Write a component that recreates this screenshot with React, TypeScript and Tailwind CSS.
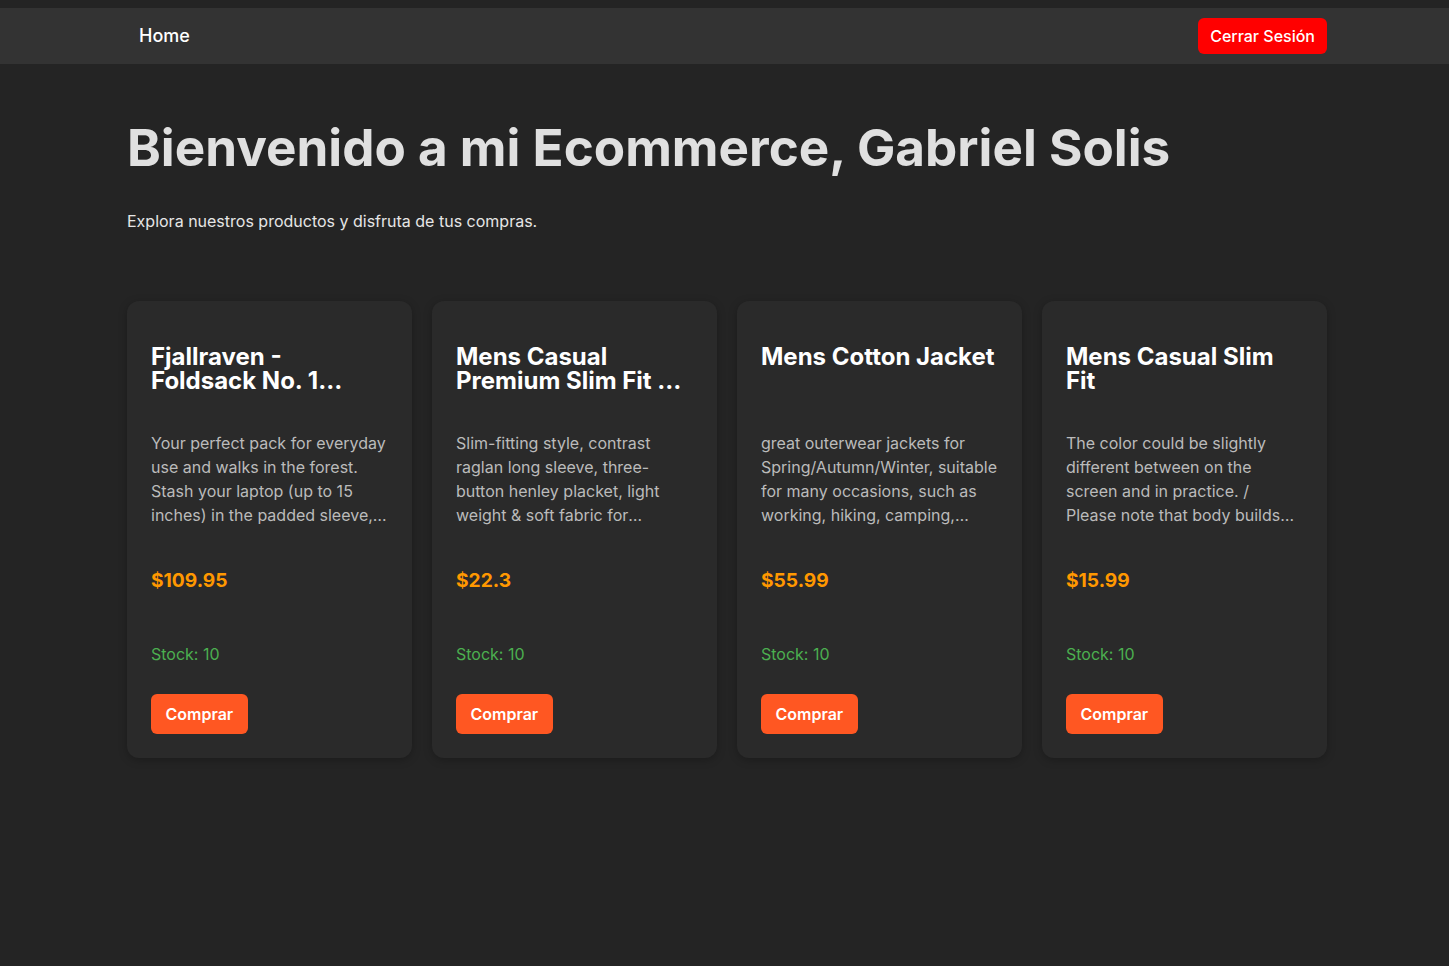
const products = [
  {
    id: 1,
    title: 'Fjallraven - Foldsack No. 1 Backpack, Fits 15 Laptops',
    description:
      'Your perfect pack for everyday use and walks in the forest. Stash your laptop (up to 15 inches) in the padded sleeve, your everyday',
    price: 109.95,
    stock: 10,
  },
  {
    id: 2,
    title: 'Mens Casual Premium Slim Fit T-Shirts',
    description:
      'Slim-fitting style, contrast raglan long sleeve, three-button henley placket, light weight & soft fabric for breathable and comfortable wearing.',
    price: 22.3,
    stock: 10,
  },
  {
    id: 3,
    title: 'Mens Cotton Jacket',
    description:
      'great outerwear jackets for Spring/Autumn/Winter, suitable for many occasions, such as working, hiking, camping, mountain/rock climbing, cycling, traveling or other outdoors.',
    price: 55.99,
    stock: 10,
  },
  {
    id: 4,
    title: 'Mens Casual Slim Fit',
    description:
      'The color could be slightly different between on the screen and in practice. / Please note that body builds vary by person, therefore, detailed size information should be reviewed below.',
    price: 15.99,
    stock: 10,
  },
];

const ProductCard = ({ product }: { product: (typeof products)[number] }) => (
  <div className="flex flex-col rounded-xl bg-[#2a2a2a] px-6 pt-11 pb-6 shadow-[0_2px_8px_rgba(0,0,0,0.25)]">
    <h2 className="h-12 line-clamp-2 text-2xl leading-6 font-bold text-white">{product.title}</h2>
    <p className="mt-[38px] h-24 line-clamp-4 text-base leading-6 text-[#bbbbbb]">{product.description}</p>
    <p className="mt-[39px] text-[19.2px] leading-[29px] font-bold text-[#ff9800]">${product.price}</p>
    <p className="mt-[47px] text-base leading-6 text-[#4caf50]">Stock: {product.stock}</p>
    <div className="mt-7">
      <button className="h-10 rounded-md bg-[#ff5722] px-[14.5px] text-base font-semibold text-white">Comprar</button>
    </div>
  </div>
);

export default function App() {
  return (
    <div className="min-h-[966px] bg-[#242424] pt-2 font-['Inter','Liberation_Sans',sans-serif]">
      <nav className="h-14 bg-[#333333]">
        <div className="ml-[127px] flex h-full w-[1200px] items-center justify-between">
          <a className="px-3 text-lg font-medium text-white">Home</a>
          <button className="h-9 rounded-md bg-[#ff0000] px-3 text-base font-medium text-white">Cerrar Sesión</button>
        </div>
      </nav>
      <main className="ml-[127px] w-[1200px]">
        <h1 className="mt-[51px] text-[51.2px] leading-[64px] font-bold text-[#e0e0e0]">
          Bienvenido a mi Ecommerce, Gabriel Solis
        </h1>
        <p className="mt-[30px] text-base leading-6 text-[#e6e6e6]">Explora nuestros productos y disfruta de tus compras.</p>
        <div className="mt-[68px] grid grid-cols-4 gap-5">
          {products.map((p) => (
            <ProductCard key={p.id} product={p} />
          ))}
        </div>
      </main>
    </div>
  );
}
